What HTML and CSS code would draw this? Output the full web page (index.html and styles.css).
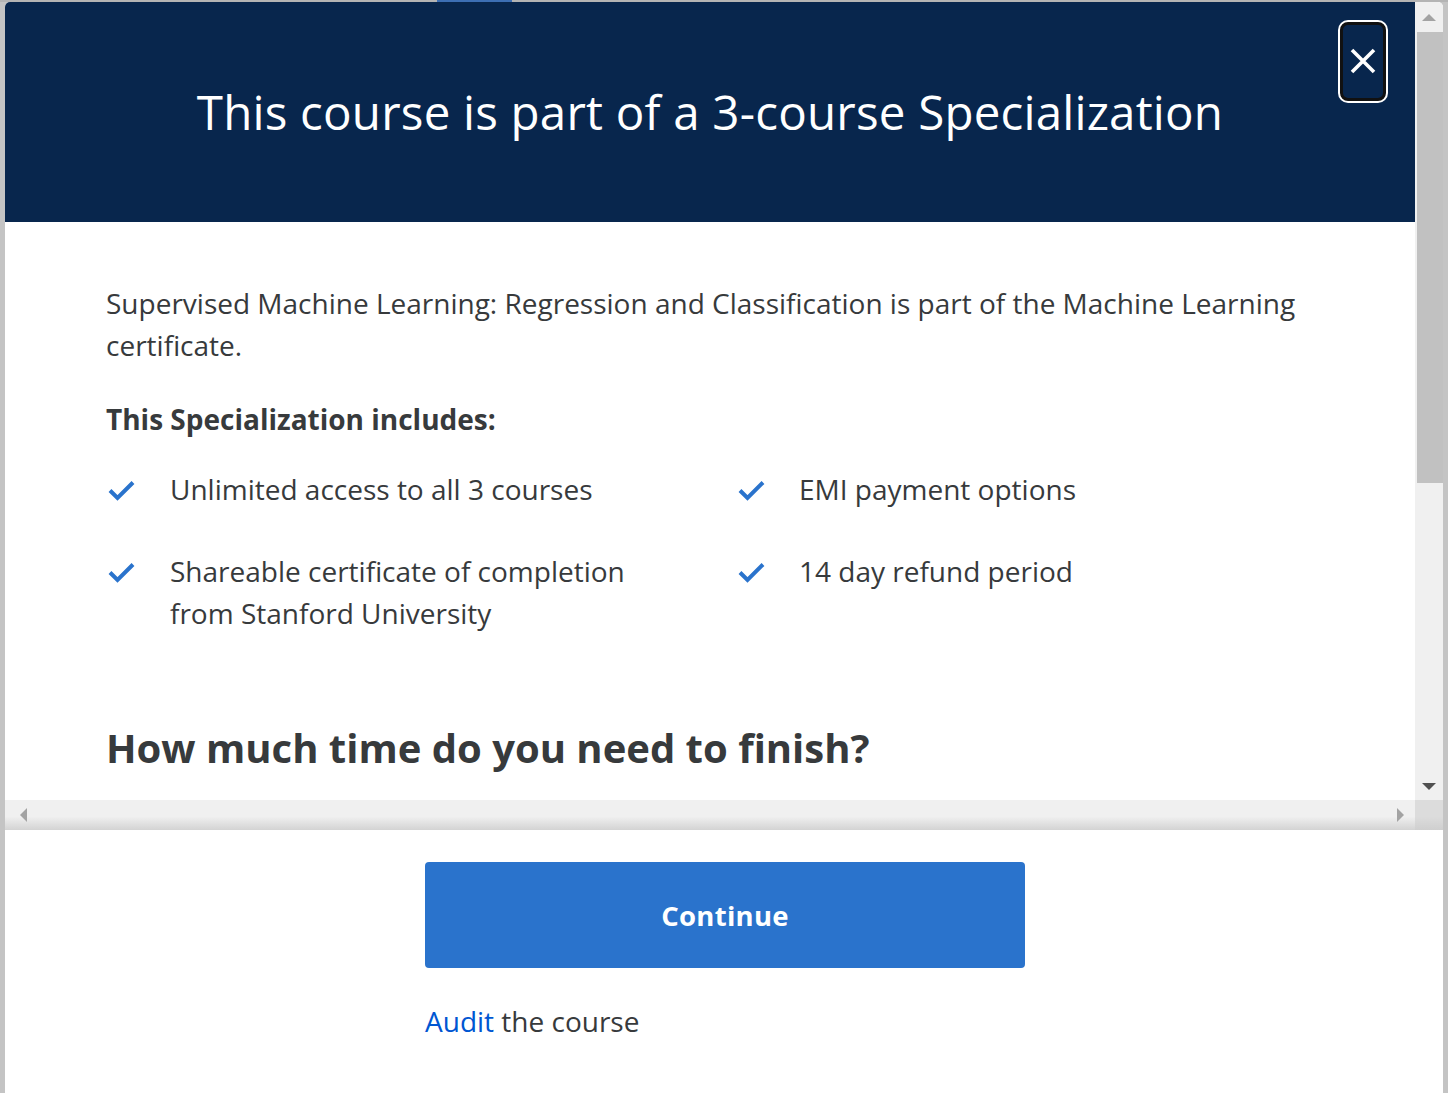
FILE: index.html
```html
<!DOCTYPE html>
<html lang="en">
<head>
<meta charset="utf-8">
<title>Specialization</title>
<link rel="stylesheet" href="styles.css">
</head>
<body>
<div class="topstrip"><span class="topstrip-accent"></span></div>
<div class="stage">
  <div class="side side-left"></div>
  <div class="modal">
    <div class="scroller">
      <div class="viewport">
        <header class="modal-header">
          <h1 class="modal-title">This course is part of a 3-course Specialization</h1>
          <button class="close-btn" aria-label="Close">
            <svg width="30" height="30" viewBox="0 0 30 30"><path d="M4 4 L26 26 M26 4 L4 26" stroke="#fff" stroke-width="3.6" fill="none"/></svg>
          </button>
        </header>
        <section class="modal-body">
          <p class="intro">Supervised Machine Learning: Regression and Classification is part of the Machine Learning certificate.</p>
          <h3 class="includes-title">This Specialization includes:</h3>
          <ul class="features">
            <li class="feature"><span class="check"><svg width="30" height="24" viewBox="0 0 30 24"><path d="M3 12.5 L10.5 20 L26 4.5" stroke="#2a73cc" stroke-width="4" fill="none"/></svg></span><span class="feature-text">Unlimited access to all 3 courses</span></li>
            <li class="feature"><span class="check"><svg width="30" height="24" viewBox="0 0 30 24"><path d="M3 12.5 L10.5 20 L26 4.5" stroke="#2a73cc" stroke-width="4" fill="none"/></svg></span><span class="feature-text">EMI payment options</span></li>
            <li class="feature"><span class="check"><svg width="30" height="24" viewBox="0 0 30 24"><path d="M3 12.5 L10.5 20 L26 4.5" stroke="#2a73cc" stroke-width="4" fill="none"/></svg></span><span class="feature-text">Shareable certificate of completion from Stanford University</span></li>
            <li class="feature"><span class="check"><svg width="30" height="24" viewBox="0 0 30 24"><path d="M3 12.5 L10.5 20 L26 4.5" stroke="#2a73cc" stroke-width="4" fill="none"/></svg></span><span class="feature-text">14 day refund period</span></li>
          </ul>
          <h2 class="time-title">How much time do you need to finish?</h2>
        </section>
      </div>
      <div class="vbar">
        <div class="vbar-btn"><span class="tri tri-up"></span></div>
        <div class="vbar-thumb"></div>
        <div class="vbar-track"></div>
        <div class="vbar-btn"><span class="tri tri-down"></span></div>
      </div>
      <div class="hbar">
        <span class="tri tri-left"></span>
        <span class="tri tri-right"></span>
      </div>
      <div class="corner"></div>
    </div>
    <footer class="modal-footer">
      <div class="actions">
        <button class="continue-btn">Continue</button>
        <p class="audit"><a class="audit-link" href="#">Audit</a> the course</p>
      </div>
    </footer>
  </div>
  <div class="side side-right"></div>
</div>
</body>
</html>
```

FILE: styles.css
```css
* { box-sizing: border-box; }
html, body { margin: 0; padding: 0; }
body {
  background: #c4c4c4;
  font-family: "Open Sans", "Noto Sans", sans-serif;
  color: #373a3c;
  width: 1448px;
  height: 1093px;
  overflow: hidden;
}
.topstrip {
  height: 2px;
  background: #b4b4b4;
  position: relative;
}
.topstrip-accent {
  position: absolute;
  left: 437px;
  top: 0;
  width: 75px;
  height: 2px;
  background: #3d6fb4;
}
.stage {
  display: flex;
  height: 1091px;
}
.side { width: 5px; background: #c4c4c4; flex: none; }
.modal {
  width: 1438px;
  flex: none;
  background: #fff;
  border-radius: 5px 5px 0 0;
  overflow: hidden;
  display: flex;
  flex-direction: column;
}
.scroller {
  height: 828px;
  display: grid;
  grid-template-columns: 1410px 28px;
  grid-template-rows: 798px 30px;
}
.viewport {
  overflow: hidden;
  background: #fff;
}
.modal-header {
  position: relative;
  height: 220px;
  background: #08264d;
  display: flex;
  align-items: center;
  justify-content: center;
}
.modal-title {
  margin: 0;
  color: #fff;
  font-weight: 400;
  font-size: 47.5px;
  line-height: 60px;
  letter-spacing: 0.2px;
}
.close-btn {
  position: absolute;
  right: 29px;
  top: 20px;
  width: 46px;
  height: 79px;
  padding: 0;
  background: #08264d;
  border: 3px solid #111;
  border-radius: 8px;
  box-shadow: 0 0 0 2px #fff;
  display: flex;
  align-items: center;
  justify-content: center;
}
.close-btn svg { display: block; margin-top: -1px; }
.modal-body {
  padding: 60px 101px 0 101px;
}
.intro {
  margin: 0;
  font-size: 28px;
  line-height: 42px;
}
.includes-title {
  margin: 35px 0 0;
  font-size: 28px;
  font-weight: 700;
  line-height: 36px;
}
.features {
  list-style: none;
  margin: 31px 0 0;
  padding: 0;
  display: grid;
  grid-template-columns: 566px 1fr;
  column-gap: 64px;
  row-gap: 40px;
}
.feature {
  display: flex;
  font-size: 28px;
  line-height: 42px;
}
.feature .check {
  width: 64px;
  flex: none;
  padding-top: 10px;
}
.feature .check svg { display: block; margin-left: 1px; }
.feature:nth-child(2) .check, .feature:nth-child(4) .check { width: 63px; }
.time-title {
  margin: 90px 0 0;
  font-size: 40px;
  line-height: 48px;
  font-weight: 700;
}
.vbar {
  background: #f0f0f0;
  display: flex;
  flex-direction: column;
  border-radius: 0 5px 0 0;
}
.vbar-btn {
  height: 30px;
  display: flex;
  align-items: center;
  justify-content: center;
  flex: none;
}
.vbar-thumb {
  height: 451px;
  margin-left: 2px;
  background: #c1c1c1;
  flex: none;
}
.vbar-track { flex: 1; }
.tri { width: 0; height: 0; display: block; }
.tri-up {
  border-left: 7px solid transparent;
  border-right: 7px solid transparent;
  border-bottom: 7px solid #a3a3a3;
}
.tri-down {
  border-left: 7px solid transparent;
  border-right: 7px solid transparent;
  border-top: 7px solid #505050;
  margin-top: 2px;
}
.hbar {
  background: linear-gradient(to bottom, #f0f0f0 0%, #f0f0f0 55%, #d3d3d3 100%);
  display: flex;
  align-items: center;
  justify-content: space-between;
  padding: 0 11px 0 15px;
}
.tri-left {
  border-top: 7px solid transparent;
  border-bottom: 7px solid transparent;
  border-right: 7px solid #a3a3a3;
}
.tri-right {
  border-top: 7px solid transparent;
  border-bottom: 7px solid transparent;
  border-left: 7px solid #a3a3a3;
}
.corner {
  background: linear-gradient(to bottom, #dcdcdc 0%, #dcdcdc 55%, #cfcfcf 100%);
}
.modal-footer {
  flex: 1;
  background: #fff;
  display: flex;
  justify-content: center;
  padding-top: 32px;
  padding-left: 2px;
}
.actions { width: 600px; }
.continue-btn {
  display: block;
  width: 600px;
  height: 106px;
  background: #2a73cc;
  color: #fff;
  border: none;
  border-radius: 4px;
  font-family: "Open Sans", "Noto Sans", sans-serif;
  font-weight: 700;
  font-size: 27.5px;
  letter-spacing: 0.3px;
}
.audit {
  margin: 35px 0 0;
  font-size: 28px;
  line-height: 36px;
}
.audit-link {
  color: #0056d2;
  text-decoration: none;
}
```
